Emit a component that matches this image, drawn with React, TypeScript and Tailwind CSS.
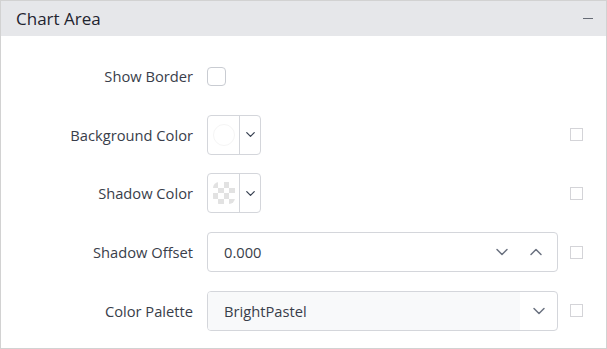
import { ChevronDown, ChevronUp } from "lucide-react";

function SideBox() {
  return <div className="w-[13px] h-[13px] border border-[#d4d4d8] bg-white" />;
}

function Checker() {
  // 4x4 checker swatch, light gray on white
  const cells = Array.from({ length: 16 }, (_, i) => i);
  return (
    <div className="grid grid-cols-4 w-[22px] h-[22px] rounded-[6px] overflow-hidden">
      {cells.map((i) => (
        <div
          key={i}
          className={(Math.floor(i / 4) + i) % 2 === 0 ? "bg-[#e2e2e2]" : "bg-white"}
        />
      ))}
    </div>
  );
}

function ColorPicker({ checker }: { checker?: boolean }) {
  return (
    <div className="flex h-10 w-[54px] rounded-[4px] border border-[#d4d6db] bg-white">
      <div className="w-8 flex items-center justify-center border-r border-[#d4d6db]">
        {checker ? (
          <Checker />
        ) : (
          <div className="w-[22px] h-[22px] rounded-full border border-[#f5f5f5]" />
        )}
      </div>
      <div className="flex-1 flex items-center justify-center text-[#374151]">
        <ChevronDown className="w-[15px] h-[15px]" strokeWidth={2} />
      </div>
    </div>
  );
}

function Row({ label, children, side }: { label: string; children: React.ReactNode; side?: boolean }) {
  return (
    <div className="flex items-center h-10">
      <div className="w-[192px] text-right text-[14.7px] text-[#393e4a]">{label}</div>
      <div className="ml-[14px] w-[351px] flex items-center">{children}</div>
      <div className="ml-[12px] w-[13px]">{side ? <SideBox /> : null}</div>
    </div>
  );
}

export default function App() {
  return (
    <div
      className="w-[607px] h-[349px] border border-[#d2d2d2] bg-white flex flex-col"
      style={{ fontFamily: '"Open Sans", "Noto Sans", sans-serif' }}
    >
      <div className="h-[35px] bg-[#e6e7ea] flex items-center justify-between pl-[15px] pr-[13px]">
        <span className="text-[17px] text-[#1f2430] font-medium">Chart Area</span>
        <span className="w-[10px] h-[1.5px] bg-[#666b75]" />
      </div>
      <div className="flex flex-col gap-[18.7px] pt-[20px]">
        <Row label="Show Border">
          <div className="w-[19px] h-[19px] rounded-[4px] border border-[#c9ccd2] bg-white" />
        </Row>
        <Row label="Background Color" side>
          <ColorPicker />
        </Row>
        <Row label="Shadow Color" side>
          <ColorPicker checker />
        </Row>
        <Row label="Shadow Offset" side>
          <div className="flex items-center h-10 w-full rounded-[4px] border border-[#d4d6db] bg-white pl-4 pr-[11px]">
            <span className="flex-1 text-[14.7px] text-[#393e4a]">0.000</span>
            <ChevronDown className="w-[20px] h-[20px] text-[#6b7280] mr-[14px]" strokeWidth={1.8} />
            <ChevronUp className="w-[20px] h-[20px] text-[#6b7280]" strokeWidth={1.8} />
          </div>
        </Row>
        <Row label="Color Palette" side>
          <div className="flex h-10 w-full rounded-[4px] border border-[#d4d6db] bg-white overflow-hidden">
            <div className="flex-1 flex items-center bg-[#f8f9fa] pl-4 text-[14.7px] text-[#393e4a]">
              BrightPastel
            </div>
            <div className="w-[37px] flex items-center justify-center">
              <ChevronDown className="w-[20px] h-[20px] text-[#6b7280]" strokeWidth={1.8} />
            </div>
          </div>
        </Row>
      </div>
    </div>
  );
}
